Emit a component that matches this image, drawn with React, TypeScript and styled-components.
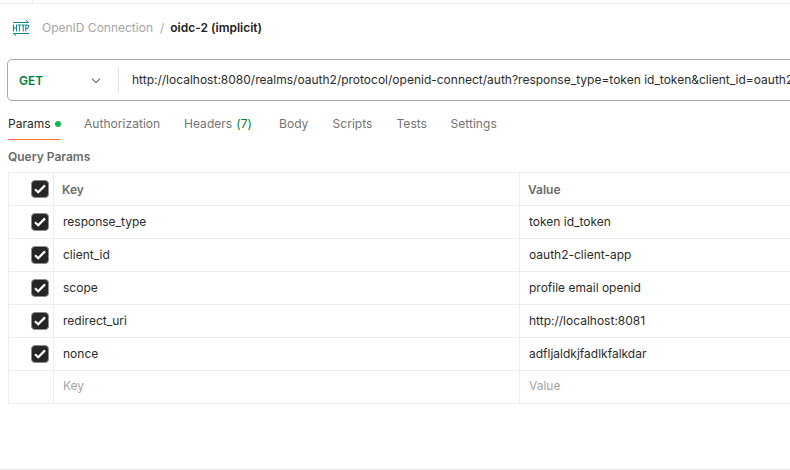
import React from 'react';
import styled, { createGlobalStyle } from 'styled-components';

const Global = createGlobalStyle`
  *, *::before, *::after { box-sizing: border-box; }
  body { margin: 0; background: #fff; overflow: hidden; }
`;

const Page = styled.div`
  display: flex;
  flex-direction: column;
  width: 790px;
  height: 470px;
  overflow: hidden;
  background: #fff;
  color: #2b2b2b;
  border-bottom: 1px solid #e8e8e8;
  font-family: Inter, sans-serif;
  font-size: 12px;
  line-height: 16px;
  white-space: nowrap;
`;

const TabStrip = styled.div`
  flex: none;
  height: 4px;
  border-bottom: 1px solid #ededed;
`;

const StripEdge = styled.div`
  width: 33px;
  height: 3px;
  border-right: 1px solid #ededed;
`;

const Breadcrumb = styled.header`
  display: flex;
  align-items: center;
  flex: none;
  height: 48px;
  padding-left: 12px;
`;

const Crumb = styled.span`
  margin-left: 12px;
  color: #a6a6a6;
`;

const Slash = styled.span`
  margin: 0 6px 0 7px;
  color: #a6a6a6;
`;

const Title = styled.span`
  color: #212121;
  font-weight: 600;
`;

const RequestBar = styled.div`
  display: flex;
  align-items: center;
  flex: none;
  width: 800px;
  height: 42px;
  margin: 7px 0 0 7px;
  border: 1px solid #a6a6a6;
  border-radius: 5px;
`;

const Method = styled.div`
  display: flex;
  flex: none;
  align-items: center;
  justify-content: space-between;
  width: 111px;
  height: 24px;
  padding: 1px 17px 0 11px;
  border-right: 1px solid #e0e0e0;
  color: #007f31;
  font-weight: 600;
`;

const Url = styled.div`
  padding-left: 13px;
`;

const Tabs = styled.nav`
  display: flex;
  flex: none;
  gap: 24px;
  height: 39px;
  padding-left: 8px;
`;

const Tab = styled.div<{ $active?: boolean; $width: number }>`
  display: flex;
  flex: none;
  align-items: center;
  width: ${p => p.$width}px;
  height: 39px;
  padding-top: 7px;
  border-bottom: 1px solid ${p => (p.$active ? '#ff6c37' : 'transparent')};
  color: ${p => (p.$active ? '#2b2b2b' : '#737373')};
  letter-spacing: 0.04px;
`;

const Dot = styled.i`
  flex: none;
  width: 6px;
  height: 6px;
  margin-left: 4px;
  border-radius: 50%;
  background: #0cbb52;
`;

const Count = styled.span`
  margin-left: 4px;
  color: #007f31;
`;

const SectionTitle = styled.h2`
  flex: none;
  margin: 9px 0 7px 8px;
  color: #6b6b6b;
  font-size: 12px;
  font-weight: 600;
  line-height: 16px;
`;

const Table = styled.div`
  flex: none;
  width: 800px;
  margin-left: 8px;
  border-top: 1px solid #ededed;
  border-left: 1px solid #ededed;
`;

const Row = styled.div`
  display: grid;
  grid-template-columns: 45px 466px 1fr;
  height: 33px;
  border-bottom: 1px solid #ededed;
`;

const Cell = styled.div<{ $tone?: 'head' | 'hint' }>`
  display: flex;
  align-items: center;
  padding-left: ${p => (p.$tone === 'head' ? 8 : 9)}px;
  padding-top: ${p => (p.$tone === 'head' ? 2 : 0)}px;
  padding-bottom: ${p => (p.$tone === 'hint' ? 2 : 0)}px;
  border-right: 1px solid #ededed;
  color: ${p => (p.$tone === 'head' ? '#6b6b6b' : p.$tone === 'hint' ? '#a6a6a6' : '#2b2b2b')};
  font-weight: ${p => (p.$tone === 'head' ? 600 : 400)};
`;

const CheckCell = styled.div`
  display: flex;
  align-items: center;
  justify-content: flex-end;
  padding-right: 4px;
  border-right: 1px solid #ededed;
`;

const CheckBox = styled.span`
  display: flex;
  align-items: center;
  justify-content: center;
  width: 18px;
  height: 18px;
  border: 1px solid #8c8c8c;
  border-radius: 4px;
  background: #262626;
`;

const Checked = () => (
  <CheckBox>
    <svg width="16" height="16" viewBox="0 0 16 16" fill="none">
      <path d="M3 8.2 6.2 11.2 13 4.4" stroke="#fff" strokeWidth="2.2" />
    </svg>
  </CheckBox>
);

const HttpIcon = () => (
  <svg width="18" height="18" viewBox="0 0 18 18" fill="none" stroke="#128091">
    <path d="M1 3.5H16.5L13.8 1.2M17 14.5H1.5L4.2 16.8" />
    <path
      d="M1.5 5.5V12.5M4.5 5.5V12.5M1.5 9H4.5M5.6 6H9.2M7.4 6V12.5M9.6 6H12.8M11.2 6V12.5M13.8 12.5V6H15.3Q16.7 6 16.7 7.6T15.3 9.4H13.8"
      strokeWidth="1.05"
    />
  </svg>
);

const Chevron = () => (
  <svg width="10" height="6" viewBox="0 0 10 6" fill="none" stroke="#6b6b6b" strokeWidth="1.1">
    <path d="M1 0.7 5 4.7 9 0.7" />
  </svg>
);

const tabs: [string, number][] = [
  ['Body', 29.5],
  ['Scripts', 40],
  ['Tests', 30],
  ['Settings', 48],
];

const params = [
  ['response_type', 'token id_token'],
  ['client_id', 'oauth2-client-app'],
  ['scope', 'profile email openid'],
  ['redirect_uri', 'http://localhost:8081'],
  ['nonce', 'adfljaldkjfadlkfalkdar'],
];

export default function App() {
  return (
    <Page>
      <Global />
      <TabStrip><StripEdge /></TabStrip>
      <Breadcrumb>
        <HttpIcon />
        <Crumb>OpenID Connection</Crumb>
        <Slash>/</Slash>
        <Title>oidc-2 (implicit)</Title>
      </Breadcrumb>
      <RequestBar>
        <Method>GET<Chevron /></Method>
        <Url>http://localhost:8080/realms/oauth2/protocol/openid-connect/auth?response_type=token id_token&amp;client_id=oauth2</Url>
      </RequestBar>
      <Tabs>
        <Tab $active $width={52}>Params<Dot /></Tab>
        <Tab $width={76}>Authorization</Tab>
        <Tab $width={71}>Headers<Count>(7)</Count></Tab>
        {tabs.map(([label, width]) => <Tab key={label} $width={width}>{label}</Tab>)}
      </Tabs>
      <SectionTitle>Query Params</SectionTitle>
      <Table>
        <Row>
          <CheckCell><Checked /></CheckCell>
          <Cell $tone="head">Key</Cell>
          <Cell $tone="head">Value</Cell>
        </Row>
        {params.map(([key, value]) => (
          <Row key={key}>
            <CheckCell><Checked /></CheckCell>
            <Cell>{key}</Cell>
            <Cell>{value}</Cell>
          </Row>
        ))}
        <Row>
          <CheckCell />
          <Cell $tone="hint">Key</Cell>
          <Cell $tone="hint">Value</Cell>
        </Row>
      </Table>
    </Page>
  );
}
